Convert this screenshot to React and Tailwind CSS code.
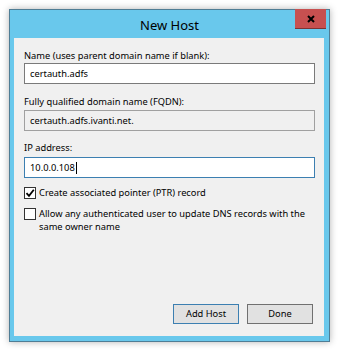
import React from "react";

const font = { fontFamily: '"Noto Sans", "Open Sans", sans-serif' };

const Field = ({ value, disabled, focused }) => (
  <div
    className={`h-[21px] w-[291px] border px-[5px] flex items-center text-[9.3px] leading-[14px] text-black ${
      disabled
        ? "bg-[#f0f0f0] border-[#a0a0a0]"
        : focused
        ? "bg-white border-[#3c7fb1]"
        : "bg-white border-[#7a7a7a]"
    }`}
  >
    {value}
    {focused && <span className="ml-[1px] w-[1px] h-[12px] bg-black" />}
  </div>
);

const Check = ({ checked }) => (
  <div className="w-[12px] h-[12px] shrink-0 border border-[#333] bg-white flex items-center justify-center">
    {checked && (
      <svg width="10" height="10" viewBox="0 0 10 10">
        <path d="M1.5 5.2 L4 7.8 L8.8 1.8" fill="none" stroke="#000" strokeWidth="1.8" />
      </svg>
    )}
  </div>
);

const Button = ({ children, primary }) => (
  <button
    className={`w-[66px] h-[20px] bg-[#e1e1e1] border text-[9.3px] leading-[14px] text-black flex items-center justify-center ${
      primary ? "border-[#3c7fb1]" : "border-[#707070]"
    }`}
  >
    {children}
  </button>
);

export default function App() {
  return (
    <div className="w-[338px] h-[350px] bg-white pt-[9px] pl-[9px]" style={font}>
      <div className="w-[321px] h-[333px] border border-[#4f7d95] bg-[#69c8ec] shadow-[0_0_7px_rgba(0,0,0,0.3)] flex flex-col">
        <div className="relative h-[28px] flex items-center justify-center">
          <span className="text-[13px] text-black leading-[18px] mt-[2px]">New Host</span>
          <div className="absolute top-[-1px] right-[3px] w-[31px] h-[20px] bg-[#c75050] border-b border-[#7d3333] flex items-center justify-center">
            <svg width="8" height="8" viewBox="0 0 8 8">
              <path d="M1 1 L7 7 M7 1 L1 7" stroke="#000" strokeWidth="2" />
            </svg>
          </div>
        </div>
        <div className="ml-[4px] w-[310px] h-[298px] bg-[#f0f0f0] pl-[10px] flex flex-col text-[9.3px] leading-[14px] text-black">
          <div className="mt-[11px]">Name (uses parent domain name if blank):</div>
          <Field value="certauth.adfs" />
          <div className="mt-[11px]">Fully qualified domain name (FQDN):</div>
          <div className="mt-[1px]">
            <Field value="certauth.adfs.ivanti.net." disabled />
          </div>
          <div className="mt-[10px]">IP address:</div>
          <div className="mt-[2px]">
            <Field value="10.0.0.108" focused />
          </div>
          <div className="mt-[8px] flex items-center gap-[3px]">
            <Check checked />
            <span>Create associated pointer (PTR) record</span>
          </div>
          <div className="mt-[7px] flex items-start gap-[3px]">
            <div className="mt-[1px]">
              <Check />
            </div>
            <span className="leading-[13px] w-[275px]">
              Allow any authenticated user to update DNS records with the same owner name
            </span>
          </div>
          <div className="mt-auto mb-[12px] flex justify-end gap-[8px] pr-[11px]">
            <Button primary>Add Host</Button>
            <Button>Done</Button>
          </div>
        </div>
      </div>
    </div>
  );
}
